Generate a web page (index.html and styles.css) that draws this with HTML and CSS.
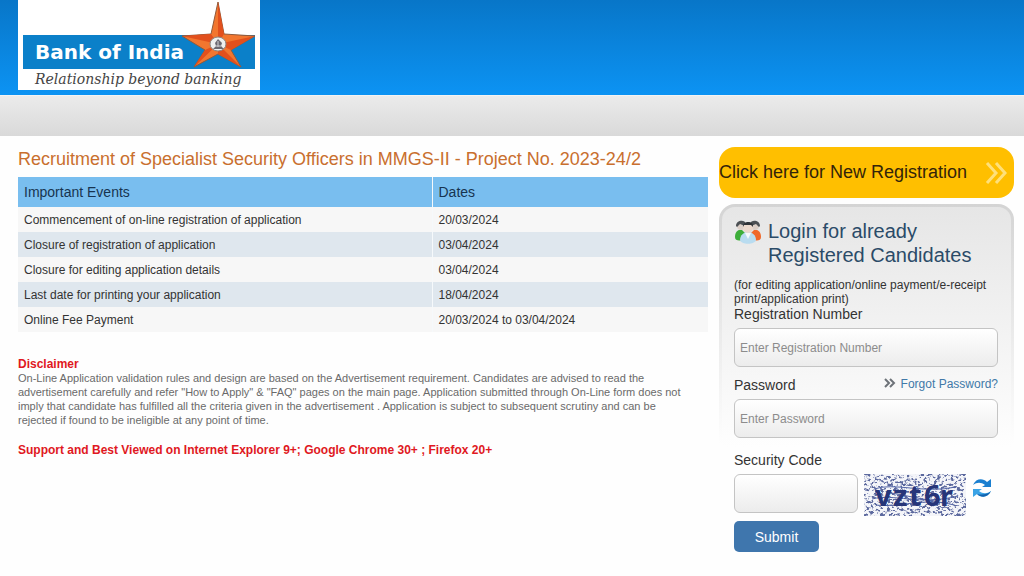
FILE: index.html
```html
<!DOCTYPE html>
<html lang="en">
<head>
<meta charset="utf-8">
<meta name="viewport" content="width=device-width, initial-scale=1">
<title>Bank of India - Recruitment of Specialist Security Officers</title>
<link rel="stylesheet" href="styles.css">
</head>
<body>
<header class="masthead">
  <div class="logo">
    <div class="logo-name">Bank of India</div>
    <div class="logo-tagline">Relationship beyond banking</div>
    <svg class="logo-star" viewBox="0 0 76 68" aria-hidden="true">
      <path d="M38 2 44 34 75 36 51 50 61 67 38 54 14 67 25 50 2 36 31 34Z" fill="#f2762f" stroke="#8f5a3c" stroke-width="1"/>
      <path d="M38 2 44 34 38 44ZM75 36 51 50 38 44ZM61 67 38 54V44ZM14 67 25 50 38 44ZM2 36 31 34 38 44Z" fill="#e2501d"/>
      <ellipse cx="38" cy="44" rx="8" ry="7" fill="#eef0ef" stroke="#8a8580"/>
      <path d="M38 39 35 43 36 46 33 49H44L41 46 42 43Z" fill="#6b6870"/>
      <path d="M38 41V47M35 46H41" stroke="#cfcfd2"/>
    </svg>
  </div>
</header>
<div class="subbar"></div>
<main class="page">
  <section class="info">
    <h1 class="title">Recruitment of Specialist Security Officers in MMGS-II - Project No. 2023-24/2</h1>
    <table class="events">
      <thead><tr><th scope="col">Important Events</th><th scope="col">Dates</th></tr></thead>
      <tbody>
        <tr><td>Commencement of on-line registration of application</td><td>20/03/2024</td></tr>
        <tr><td>Closure of registration of application</td><td>03/04/2024</td></tr>
        <tr><td>Closure for editing application details</td><td>03/04/2024</td></tr>
        <tr><td>Last date for printing your application</td><td>18/04/2024</td></tr>
        <tr><td>Online Fee Payment</td><td>20/03/2024 to 03/04/2024</td></tr>
      </tbody>
    </table>
    <h2 class="notice">Disclaimer</h2>
    <p class="disclaimer">On-Line Application validation rules and design are based on the Advertisement requirement. Candidates are advised to read the advertisement carefully and refer "How to Apply" &amp; "FAQ" pages on the main page. Application submitted through On-Line form does not imply that candidate has fulfilled all the criteria given in the advertisement . Application is subject to subsequent scrutiny and can be rejected if found to be ineligible at any point of time.</p>
    <p class="notice">Support and Best Viewed on Internet Explorer 9+; Google Chrome 30+ ; Firefox 20+</p>
  </section>
  <aside class="side">
    <a class="register" href="#">
      <span>Click here for New Registration</span>
      <svg class="register-arrows" viewBox="0 0 22 22" aria-hidden="true"><path d="M2 1 11 11 2 21M11 1 20 11 11 21" fill="none" stroke="#ffe07a" stroke-width="3"/></svg>
    </a>
    <form class="login">
      <div class="login-head">
        <svg class="people" viewBox="0 0 28 26" aria-hidden="true">
          <path d="M1 18C1 13 4 10 8 11L12 15 9 21C5 22 1 22 1 18Z" fill="#3dae3a"/>
          <path d="M27 18C27 13 24 10 20 11L16 15 19 21C23 22 27 22 27 18Z" fill="#f0682a"/>
          <circle cx="7" cy="7" r="4" fill="#ddd0c8"/><circle cx="21" cy="7" r="4" fill="#ddd0c8"/>
          <path d="M2 7C2 1 11 0 12 5L11 7 6 5 3 8ZM26 7C26 1 17 0 16 5L17 7 22 5 25 8Z" fill="#4c5054"/>
          <path d="M6 21C6 16 10 13 14 13S22 16 22 21C21 26 7 26 6 21Z" fill="#b9dcf0"/>
          <path d="M11 14 14 20 17 14Z" fill="#f5fafc"/>
          <circle cx="14" cy="9" r="5" fill="#ecd9cd"/>
          <path d="M9 8C8 2 20 1 19 8L17 6 10 6Z" fill="#303438"/>
        </svg>
        <h2 class="login-title">Login for already Registered Candidates</h2>
      </div>
      <p class="login-note">(for editing application/online payment/e-receipt print/application print)</p>
      <label class="label" for="reg">Registration Number</label>
      <input class="field" id="reg" type="text" placeholder="Enter Registration Number">
      <div class="password-row">
        <label class="label" for="pwd">Password</label>
        <a class="forgot" href="#"><svg class="forgot-arrows" viewBox="0 0 12 10" aria-hidden="true"><path d="M1 1 5 5 1 9M6 1 10 5 6 9" fill="none" stroke="#6d7278" stroke-width="2"/></svg>Forgot Password?</a>
      </div>
      <input class="field" id="pwd" type="password" placeholder="Enter Password">
      <label class="label code-label" for="code">Security Code</label>
      <div class="code-row">
        <input class="field code-field" id="code" type="text">
        <svg class="captcha" viewBox="0 0 102 42" role="img" aria-label="Security code image">
          <defs>
            <filter id="speckle" x="0" y="0" width="100%" height="100%" color-interpolation-filters="sRGB">
              <feTurbulence type="fractalNoise" baseFrequency=".3 .4" numOctaves="3" seed="8"/>
              <feColorMatrix values="0 0 0 0 .36  0 0 0 0 .41  0 0 0 0 .62  7 0 0 0 -3.5"/>
            </filter>
          </defs>
          <rect width="102" height="42" fill="#f4f5f9"/>
          <rect width="102" height="42" filter="url(#speckle)"/>
          <path d="M10 15C30 8 60 20 92 13M8 25C30 19 55 32 94 22M12 31C35 34 60 23 90 31M22 18 80 29M30 12 52 31" fill="none" stroke="#5163a5" stroke-width="1"/>
          <text class="captcha-text" x="11 29 45 60 76" y="32">vzt6r</text>
        </svg>
        <button class="refresh" type="button" aria-label="Refresh security code">
          <svg viewBox="0 0 20 20" aria-hidden="true">
            <path d="M1 7C4 0 11 0 15 4L19 1V9H10L13 7C9 4 5 4 1 7Z" fill="#1a7fd0"/>
            <path d="M19 13C16 20 9 20 5 16L1 19V11H10L7 13C11 16 15 16 19 13Z" fill="#3aa3e6"/>
            <path d="M5 16C9 20 16 20 19 13 15 17 9 17 5 16Z" fill="#1264b0"/>
          </svg>
        </button>
      </div>
      <button class="submit" type="submit">Submit</button>
    </form>
  </aside>
</main>
</body>
</html>
```
FILE: styles.css
```css
* { box-sizing: border-box; }

body {
  margin: 0;
  background: #fefefe;
  color: #333;
  font-family: "Liberation Sans", Arial, sans-serif;
  font-size: 12px;
}

h1, h2, p { margin: 0; font-weight: normal; }

.masthead {
  height: 95px;
  padding: 0 18px;
  background: linear-gradient(#0876c8, #0c93f3);
}

.logo {
  position: relative;
  width: 242px;
  height: 90px;
  padding: 35px 5px 0;
  background: #fff;
}

.logo-name {
  height: 34px;
  padding-left: 12px;
  background: #0b80c9;
  color: #fff;
  font: bold 20px/34px "DejaVu Sans", sans-serif;
}

.logo-tagline {
  padding-left: 12px;
  color: #444;
  font: italic 14px/21px "DejaVu Serif", serif;
  white-space: nowrap;
}

.logo-star {
  position: absolute;
  top: 0;
  right: 4px;
  width: 76px;
  height: 68px;
}

.subbar {
  height: 41px;
  border-top: 1px solid #f3f3f3;
  background: linear-gradient(#ebebeb, #d9d9d9);
}

.page {
  display: flex;
  align-items: flex-start;
  gap: 11px;
  padding: 11px 10px 0 18px;
}

.info { flex: 1; }

.title {
  color: #c96f2e;
  font-size: 18px;
  line-height: 24px;
}

.events {
  width: 100%;
  margin: 6px 0 25px;
  border-collapse: collapse;
  table-layout: fixed;
}

.events th, .events td {
  height: 25px;
  padding: 0 6px;
  text-align: left;
}

.events th:first-child { width: 60%; }
.events th + th, .events td + td { border-left: 1px solid #f6f9fb; }

.events th {
  height: 30px;
  background: #79beef;
  color: #173450;
  font-size: 14px;
  font-weight: normal;
}

.events td { background: #f7f7f7; }
.events tr:nth-child(even) td { background: #dfe7ee; }

.notice {
  color: #e01822;
  font-size: 12px;
  font-weight: bold;
  line-height: 14px;
}

.disclaimer {
  margin-bottom: 16px;
  padding-right: 12px;
  color: #6a6a6a;
  font-size: 11px;
  line-height: 14px;
}

.side { width: 295px; }

.register {
  display: flex;
  align-items: center;
  justify-content: space-between;
  height: 51px;
  padding-right: 7px;
  border-radius: 16px;
  background: #ffbf00;
  color: #33240a;
  font-size: 18px;
  text-decoration: none;
  white-space: nowrap;
}

.register-arrows { width: 22px; height: 22px; }

.login {
  margin-top: 6px;
  padding: 12px 13px 0 12px;
  border: 3px solid transparent;
  border-radius: 16px;
  background:
    linear-gradient(#e6e6e6, #fefefe 240px) padding-box,
    linear-gradient(#d4d4d4, #fefefe 240px) border-box;
}

.login-head { display: flex; gap: 6px; }
.people { flex: none; width: 28px; height: 26px; }

.login-title {
  color: #2b4b68;
  font-size: 20px;
  line-height: 24px;
}

.login-note {
  margin-top: 11px;
  color: #333;
  font-size: 12px;
  line-height: 14px;
}

.label {
  display: block;
  color: #333;
  font-size: 14px;
  line-height: 16px;
}

.field {
  display: block;
  width: 100%;
  height: 39px;
  margin-top: 6px;
  padding: 0 5px;
  border: 1px solid #c4c4c4;
  border-radius: 6px;
  background: linear-gradient(#fff, #ececec);
  font: 12px "Liberation Sans", Arial, sans-serif;
}

.field::placeholder { color: #8c8c8c; opacity: 1; }

.password-row {
  display: flex;
  justify-content: space-between;
  margin-top: 10px;
}

.forgot {
  color: #4179a8;
  font-size: 12px;
  line-height: 14px;
  text-decoration: none;
}

.forgot-arrows { width: 12px; height: 10px; margin-right: 5px; }
.code-label { margin-top: 14px; }

.code-row {
  display: flex;
  align-items: flex-start;
  gap: 6px;
  margin-top: 6px;
}

.code-field { width: 124px; margin-top: 0; }
.captcha { width: 102px; height: 42px; }

.captcha-text {
  fill: #263579;
  font: bold 29px "Noto Sans", sans-serif;
}

.refresh {
  width: 20px;
  height: 20px;
  margin-top: 4px;
  padding: 0;
  border: 0;
  background: none;
}

.submit {
  width: 85px;
  height: 31px;
  margin-top: 5px;
  border: 0;
  border-radius: 5px;
  background: #3f76ad;
  color: #fff;
  font: 14px "Liberation Sans", Arial, sans-serif;
}
```
